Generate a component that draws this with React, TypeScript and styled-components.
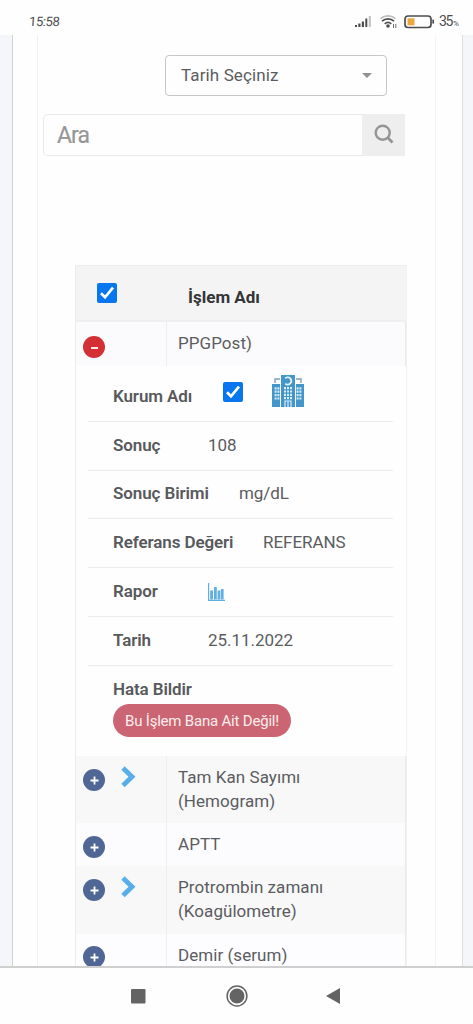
import React from "react";
import styled, { createGlobalStyle } from "styled-components";

const Global = createGlobalStyle`
  * { box-sizing: border-box; }
  body { margin: 0; background: #fff; font-family: Roboto, "Liberation Sans", sans-serif; color: #5b5c5f; }
`;

const Screen = styled.div`
  width: 473px;
  height: 1024px;
  display: flex;
  flex-direction: column;
  overflow: hidden;
  background: #fefefe;
`;

const StatusBar = styled.header`
  height: 35px;
  flex: none;
  display: flex;
  align-items: center;
  padding: 9px 15px 0 29px;
  color: #4d4d4d;
`;

const Clock = styled.span`
  font-size: 13px;
  letter-spacing: -0.4px;
  margin-right: auto;
  line-height: 16px;
  transform: skewX(-4deg);
`;

const BatteryText = styled.span`
  font-size: 14px;
  letter-spacing: -1.4px;
  line-height: 16px;
  display: flex;
  align-items: baseline;
  width: 19px;
  white-space: nowrap;
`;

const Percent = styled.small`
  font-size: 8px;
  margin-left: 1px;
`;

const StatusIcons = styled.svg`
  width: 82px;
  height: 18px;
  margin-right: 3px;
`;

const Viewport = styled.main`
  height: 931px;
  flex: none;
  overflow: hidden;
  display: flex;
  background: #f4f6fa;
  padding: 0 12px;
`;

const Card = styled.div`
  flex: 1;
  background: #fefefe;
  border-left: 1px solid #cfd1cf;
  border-right: 1px solid #dcdee1;
  margin-right: -1px;
  padding: 0 26px 0 24px;
  margin-right: 0;
`;

const Panel = styled.section`
  height: 100%;
  border-left: 1px solid #f0f0f0;
  border-right: 1px solid #f4f4f4;
  padding: 20px 28px 0 5px;
`;

const Select = styled.div`
  margin: 0 19px 0 122px;
  width: 222px;
  height: 41px;
  border: 1px solid #c6c6c6;
  border-radius: 4px;
  display: flex;
  align-items: center;
  justify-content: space-between;
  padding: 0 14px 2px 15px;
  font-size: 17px;
  letter-spacing: 0.12px;
`;

const Caret = styled.i`
  border: 5px solid transparent;
  border-top-color: #909090;
  border-bottom: 0;
  margin-top: 2px;
`;

const Search = styled.div`
  margin-top: 18px;
  width: 362px;
  height: 42px;
  display: flex;
`;

const SearchField = styled.div`
  flex: 1;
  border: 1px solid #e9e9e9;
  border-right: 0;
  border-radius: 5px 0 0 5px;
  font-size: 23px;
  letter-spacing: -0.9px;
  -webkit-text-stroke: 0.2px #969696;
  line-height: 41px;
  padding-left: 13px;
  color: #969696;
`;

const SearchButton = styled.div`
  width: 43px;
  background: #eee;
  display: flex;
  align-items: center;
  justify-content: center;
  padding-bottom: 3px;
`;

const Table = styled.div`
  margin: 109px 0 0 32px;
  width: 332px;
  border-left: 1px solid #ececec;
  border-right: 1px solid #f1f1f1;
  font-size: 17px;
`;

const HeadRow = styled.div`
  height: 57px;
  display: flex;
  align-items: center;
  background: #f4f4f4;
  border-top: 1px solid #eee;
  border-bottom: 2px solid #efefef;
  padding-left: 21px;
`;

const HeadLabel = styled.b`
  margin: 8px 0 0 71px;
  font-weight: 700;
  color: #343536;
`;

const Check = styled.span`
  width: 20px;
  height: 20px;
  border-radius: 2px;
  background: #0876ee;
  display: flex;
`;

const Row = styled.div<{ $tone: string; $height: number }>`
  height: ${(p) => p.$height}px;
  width: 330px;
  background: ${(p) => p.$tone};
  border-right: 1px solid #e9e9e9;
  display: flex;
`;

const ToggleCell = styled.div<{ $open?: boolean }>`
  width: 91px;
  flex: none;
  border-right: 1px solid #eee;
  padding: ${(p) => (p.$open ? 13.5 : 12.5)}px 0 0 7px;
  display: flex;
  align-items: flex-start;
`;

const NameCell = styled.div`
  padding: 9px 12px 0 11px;
  line-height: 24px;
  letter-spacing: 0.05px;
  white-space: pre-line;
`;

const Toggle = styled.span<{ $open?: boolean }>`
  width: 22px;
  height: 22px;
  border-radius: 50%;
  background: ${(p) => (p.$open ? "#d32f35" : "#506796")};
  display: flex;
  align-items: center;
  justify-content: center;
  flex: none;
`;

const Chevron = styled.svg`
  width: 16px;
  height: 24px;
  margin: -4px 0 0 15px;
`;

const Details = styled.dl`
  margin: 0;
  height: 390px;
  padding: 7px 13px 0 12px;
`;

const Detail = styled.div`
  height: 48.8px;
  border-bottom: 1px solid #ececec;
  padding: 0 0 2px 25px;
  display: flex;
  align-items: center;
`;

const Term = styled.dt<{ $width: number }>`
  width: ${(p) => p.$width}px;
  flex: none;
  font-weight: 600;
  letter-spacing: -0.1px;
  color: #58595c;
`;

const Value = styled.dd`
  margin: 0;
  letter-spacing: -0.05px;
  display: flex;
  align-items: center;
`;

const InstitutionIcons = styled.div`
  display: flex;
  align-items: flex-start;
  gap: 29px;
  margin-bottom: 9px;
`;

const BoxOffset = styled.div`
  padding-top: 7px;
`;

const Report = styled.div`
  padding: 13px 0 0 25px;
`;

const ReportButton = styled.button`
  display: block;
  margin-top: 5px;
  width: 178px;
  height: 33px;
  border: 0;
  border-radius: 17px;
  background: #cc6573;
  color: #faeeee;
  font: 400 15px Roboto, sans-serif;
  letter-spacing: -0.2px;
  padding: 2px 0 0;
  white-space: nowrap;
`;

const NavBar = styled.nav`
  flex: 1;
  border-top: 2px solid #cfcfcf;
  background: #fefefe;
  display: flex;
  align-items: flex-start;
  padding: 16px 0 0 131px;
`;

const NavIcon = styled.svg<{ $gap?: number }>`
  width: 24px;
  height: 24px;
  margin-left: ${(p) => p.$gap ?? 0}px;
`;

function CheckBox() {
  return (
    <Check>
      <svg width="20" height="20" viewBox="0 0 20 20">
        <path d="M4 10.3 8 14.3 16 4.6" fill="none" stroke="#fff" strokeWidth="2.7" />
      </svg>
    </Check>
  );
}

function ToggleIcon({ open }: { open?: boolean }) {
  return (
    <Toggle $open={open}>
      <svg width="22" height="22" viewBox="0 0 22 22">
        <path d={open ? "M8 12h7" : "M7.5 11.5h8M11.5 7.5v8"} stroke="#fff" strokeWidth="1.8" />
      </svg>
    </Toggle>
  );
}

function Hospital() {
  return (
    <svg width="32" height="32" viewBox="0 0 32 32">
      <path fill="#4396ca" d="M9 0h14v32H9zM0 9h8v23H0zM24 9h8v23h-8z" />
      <path d="M3 8V4h5M29 8V4h-5" fill="none" stroke="#7f9fb4" strokeWidth="1.4" />
      <path d="M13.3 3.3A3.6 3.6 0 1 1 13.3 8.6" fill="none" stroke="#e8f4fc" strokeWidth="1.8" />
      <g fill="#d9ecf8">
        {[12.2, 15.6, 19, 22.4].map((y) => (
          <path key={y} d={`M2.6 ${y}h2v2.2h-2zM5.4 ${y}h2v2.2h-2zM24.6 ${y}h2v2.2h-2zM27.4 ${y}h2v2.2h-2z`} />
        ))}
        {[12, 15.4, 18.8, 22].map((y) => (
          <path key={y} d={`M12 ${y}h2v2.2h-2zM15 ${y}h2v2.2h-2zM18 ${y}h2v2.2h-2z`} />
        ))}
      </g>
      <path d="M13 32v-6h6v6M16 26v6" fill="none" stroke="#d9ecf8" strokeWidth="1.2" />
    </svg>
  );
}

function Chart() {
  return (
    <svg width="17" height="20" viewBox="0 0 17 20">
      <path d="M.6 2v17.3H17" fill="none" stroke="#5fb0e0" strokeWidth="1.2" />
      <path d="M2.2 9.5h2.8v9H2.2zM6 6h2.8v12.5H6zM9.6 9.5h2.8v9H9.6zM13 8h2.6v10.5H13z" fill="#5fb0e0" />
    </svg>
  );
}

const results: { label: string; width: number; value: React.ReactNode }[] = [
  {
    label: "Kurum Adı",
    width: 110,
    value: (
      <InstitutionIcons>
        <BoxOffset><CheckBox /></BoxOffset>
        <Hospital />
      </InstitutionIcons>
    ),
  },
  { label: "Sonuç", width: 95, value: "108" },
  { label: "Sonuç Birimi", width: 126, value: "mg/dL" },
  { label: "Referans Değeri", width: 150, value: "REFERANS" },
  { label: "Rapor", width: 95, value: <Chart /> },
  { label: "Tarih", width: 95, value: "25.11.2022" },
];

const tests = [
  { name: "Tam Kan Sayımı\n(Hemogram)", group: true, tone: "#f8f8f8", height: 67.3 },
  { name: "APTT", group: false, tone: "#fcfcfe", height: 43.2 },
  { name: "Protrombin zamanı\n(Koagülometre)", group: true, tone: "#f8f8f8", height: 67.5 },
  { name: "Demir (serum)", group: false, tone: "#fdfdff", height: 43 },
];

export default function App() {
  return (
    <Screen>
      <Global />
      <StatusBar>
        <Clock>15:58</Clock>
        <StatusIcons viewBox="0 0 82 18">
          <g fill="#4d4d4d">
            <path d="M1 12h2v2H1zM4.3 10.5h2.2V14H4.3zM7.8 8.5H10V14H7.8z" />
            <path d="M11.3 5.5h2V14h-2z" />
            <path d="M14.8 3h2v11h-2z" fill="#c0c0c0" />
            <circle cx="34" cy="13" r="1.8" />
          </g>
          <g fill="none" stroke="#4d4d4d" strokeWidth="1.7">
            <path d="M26.5 5.6a12 12 0 0 1 15 0" stroke="#bcbcbc" />
            <path d="M28 8.2a9 9 0 0 1 12 0M30.7 10.9a5 5 0 0 1 6.6 0" />
            <path d="M39.5 11v4M41.8 11v4" strokeWidth=".8" />
            <rect x="51" y="3" width="26" height="11.5" rx="3" />
            <path d="M79.2 6.6v4" />
          </g>
          <rect x="53.5" y="5.3" width="7" height="7" fill="#eda63e" />
        </StatusIcons>
        <BatteryText>35<Percent>%</Percent></BatteryText>
      </StatusBar>
      <Viewport>
        <Card>
          <Panel>
            <Select>Tarih Seçiniz<Caret /></Select>
            <Search>
              <SearchField>Ara</SearchField>
              <SearchButton>
                <svg width="20" height="20" viewBox="0 0 20 20" fill="none" stroke="#959595">
                  <circle cx="8.7" cy="8.7" r="7" strokeWidth="2.4" />
                  <path d="m13.8 13.8 4.7 4.7" strokeWidth="2.8" />
                </svg>
              </SearchButton>
            </Search>
            <Table>
              <HeadRow><CheckBox /><HeadLabel>İşlem Adı</HeadLabel></HeadRow>
              <Row $tone="#fbfbfd" $height={44}>
                <ToggleCell $open><ToggleIcon open /></ToggleCell>
                <NameCell>PPGPost)</NameCell>
              </Row>
              <Details>
                {results.map((r) => (
                  <Detail key={r.label}>
                    <Term $width={r.width}>{r.label}</Term>
                    <Value>{r.value}</Value>
                  </Detail>
                ))}
                <Report>
                  <Term as="div" $width={178}>Hata Bildir</Term>
                  <ReportButton>Bu İşlem Bana Ait Değil!</ReportButton>
                </Report>
              </Details>
              {tests.map((t) => (
                <Row key={t.name} $tone={t.tone} $height={t.height}>
                  <ToggleCell>
                    <ToggleIcon />
                    {t.group && (
                      <Chevron viewBox="0 0 16 24">
                        <path d="m3 3 9 8.7L3 20.5" fill="none" stroke="#58aeea" strokeWidth="4.8" />
                      </Chevron>
                    )}
                  </ToggleCell>
                  <NameCell>{t.name}</NameCell>
                </Row>
              ))}
            </Table>
          </Panel>
        </Card>
      </Viewport>
      <NavBar>
        <NavIcon viewBox="0 0 24 24"><rect y="5" width="14.5" height="14.5" rx="1" fill="#646464" /></NavIcon>
        <NavIcon $gap={70} viewBox="0 0 24 24">
          <circle cx="12" cy="12" r="9.9" fill="none" stroke="#646464" strokeWidth="1.5" />
          <circle cx="12" cy="12" r="7.5" fill="#646464" />
        </NavIcon>
        <NavIcon $gap={73} viewBox="0 0 24 24"><path d="M4 12 18 4v16z" fill="#646464" /></NavIcon>
      </NavBar>
    </Screen>
  );
}
